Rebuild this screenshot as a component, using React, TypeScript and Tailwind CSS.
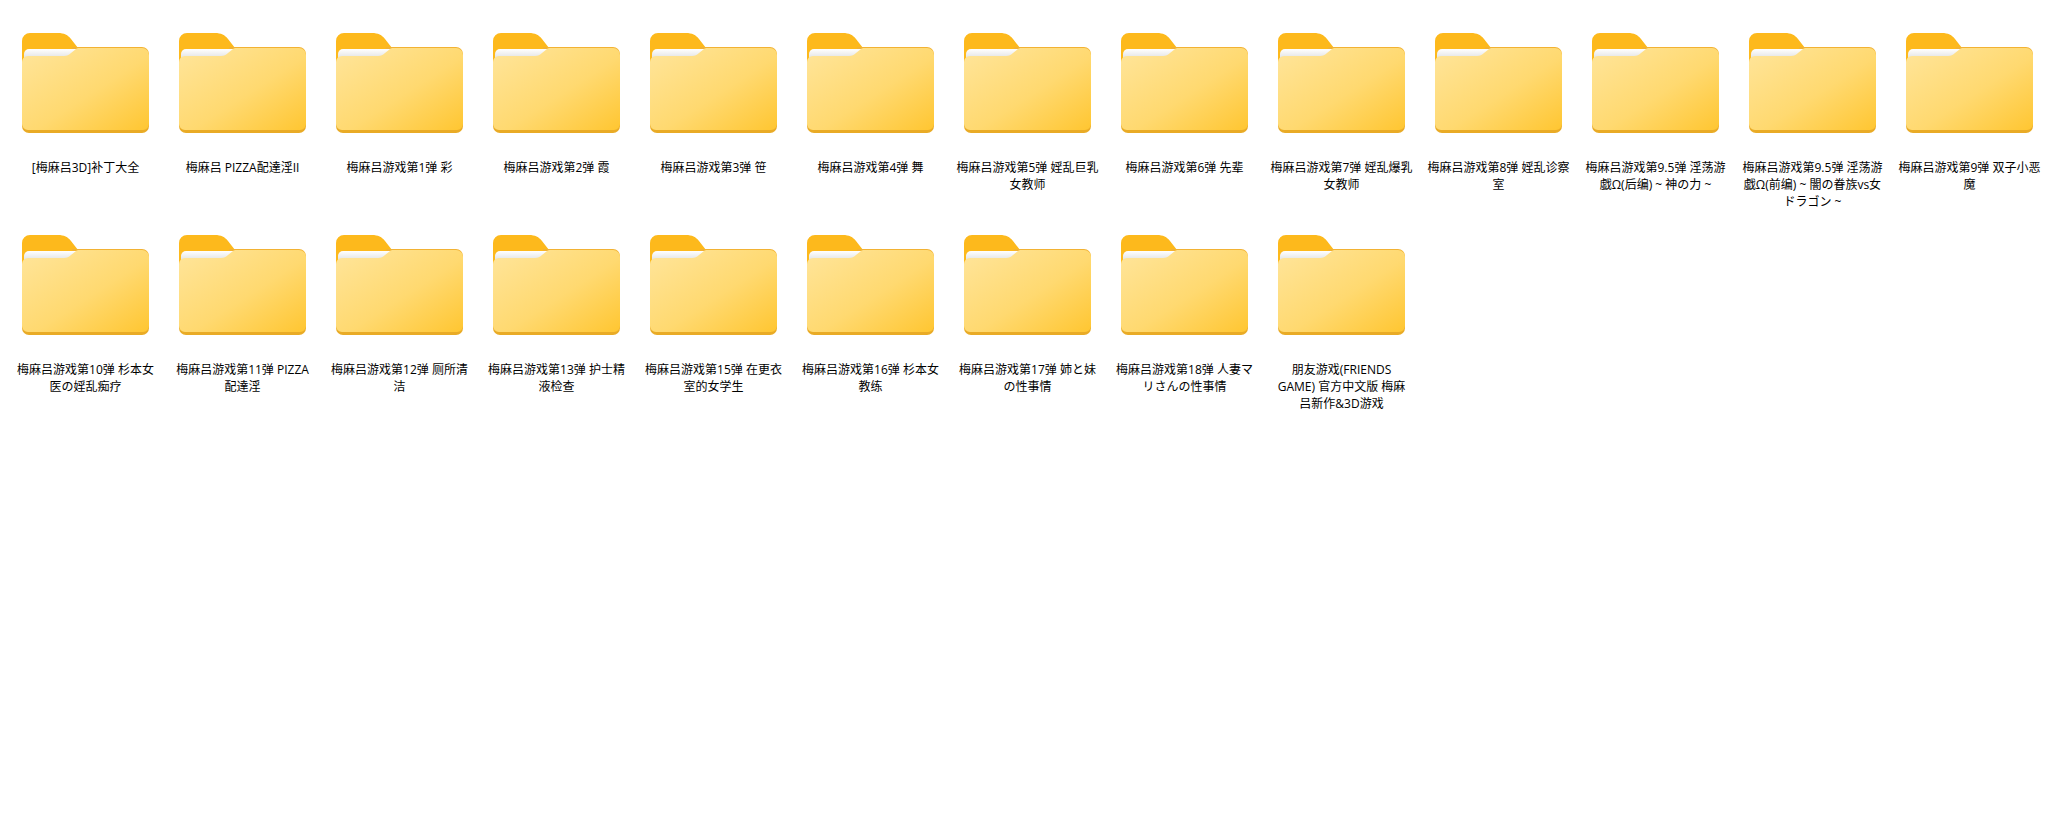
const titles = [
  '[梅麻吕3D]补丁大全',
  '梅麻吕 PIZZA配達淫II',
  '梅麻吕游戏第1弹 彩',
  '梅麻吕游戏第2弹 霞',
  '梅麻吕游戏第3弹 笹',
  '梅麻吕游戏第4弹 舞',
  '梅麻吕游戏第5弹 婬乱巨乳女教师',
  '梅麻吕游戏第6弹 先辈',
  '梅麻吕游戏第7弹 婬乱爆乳女教师',
  '梅麻吕游戏第8弹 婬乱诊察室',
  '梅麻吕游戏第9.5弹 淫荡游戯Ω(后编) ~ 神の力 ~',
  '梅麻吕游戏第9.5弹 淫荡游戯Ω(前编) ~ 闇の眷族vs女\nドラゴン ~',
  '梅麻吕游戏第9弹 双子小恶魔',
  '梅麻吕游戏第10弹 杉本女医の婬乱痴疗',
  '梅麻吕游戏第11弹 PIZZA配達淫',
  '梅麻吕游戏第12弹 厕所清洁',
  '梅麻吕游戏第13弹 护士精液检查',
  '梅麻吕游戏第15弹 在更衣室的女学生',
  '梅麻吕游戏第16弹 杉本女教练',
  '梅麻吕游戏第17弹 姉と妹の性事情',
  '梅麻吕游戏第18弹 人妻マリさんの性事情',
  '朋友游戏(FRIENDS\nGAME) 官方中文版 梅麻\n吕新作&3D游戏',
];

function FolderIcon({ id }: { id: number }) {
  return (
    <svg width="127" height="100" viewBox="0 0 127 100" className="block">
      <defs>
        <linearGradient id={`front-${id}`} x1="0" y1="0" x2="1" y2="1">
          <stop offset="0" stopColor="#ffe59b" />
          <stop offset="0.55" stopColor="#ffd970" />
          <stop offset="1" stopColor="#ffc631" />
        </linearGradient>
        <linearGradient id={`paper-${id}`} x1="0" y1="0" x2="0" y2="1">
          <stop offset="0" stopColor="#ffffff" />
          <stop offset="1" stopColor="#dfe0e0" />
        </linearGradient>
      </defs>
      {/* tab */}
      <path d="M0 8a8 8 0 0 1 8-8h28c6 0 10 2 13 6l7 9v15H0z" fill="#fdb91c" />
      {/* back edge */}
      <path d="M50 14h70a7 7 0 0 1 7 7v20H50z" fill="#f2b233" />
      {/* paper */}
      <path d="M2 26v-5a5 5 0 0 1 5-5h49v10z" fill={`url(#paper-${id})`} />
      {/* bottom edge */}
      <path d="M0 60h127v33a7 7 0 0 1-7 7H7a7 7 0 0 1-7-7z" fill="#e9ab26" />
      {/* front */}
      <path
        d="M0 29a6 6 0 0 1 6-6h36c3 0 5-1 7-3l5-4c1-1 2-1 3-1h63a7 7 0 0 1 7 7v69a6 6 0 0 1-6 6H6a6 6 0 0 1-6-6z"
        fill={`url(#front-${id})`}
      />
    </svg>
  );
}

export default function App() {
  return (
    <div className="min-h-[818px] bg-white pt-[33px] pl-[7px]">
      <div className="grid grid-cols-[repeat(13,157px)] auto-rows-[202px]">
        {titles.map((title, i) => (
          <div key={title} className="flex flex-col items-center">
            <FolderIcon id={i} />
            <div
              className="mt-[26px] w-[143px] whitespace-pre-line text-center text-[12px] leading-[17px] text-black"
              style={{ fontFamily: '"Open Sans", "Noto Sans CJK SC", sans-serif' }}
            >
              {title}
            </div>
          </div>
        ))}
      </div>
    </div>
  );
}
